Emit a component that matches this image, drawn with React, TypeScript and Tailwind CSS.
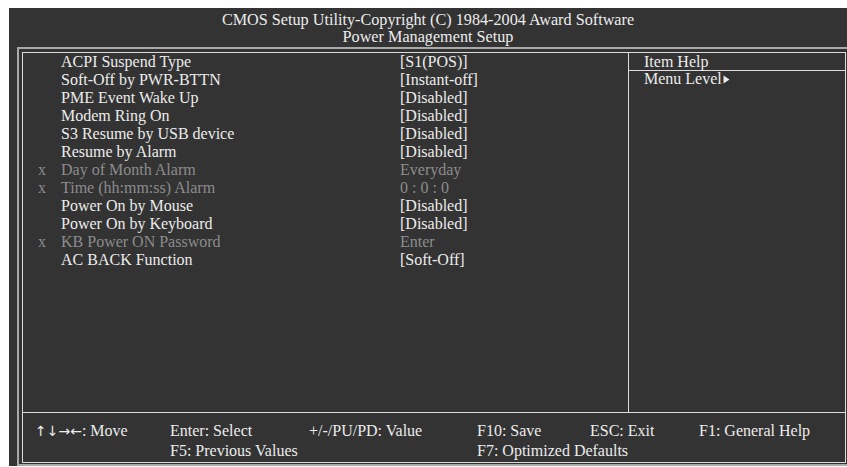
import React from "react";

type Row = { x?: boolean; label: string; value: string };

const rows: Row[] = [
  { label: "ACPI Suspend Type", value: "[S1(POS)]" },
  { label: "Soft-Off by PWR-BTTN", value: "[Instant-off]" },
  { label: "PME Event Wake Up", value: "[Disabled]" },
  { label: "Modem Ring On", value: "[Disabled]" },
  { label: "S3 Resume by USB device", value: "[Disabled]" },
  { label: "Resume by Alarm", value: "[Disabled]" },
  { x: true, label: "Day of Month Alarm", value: "Everyday" },
  { x: true, label: "Time (hh:mm:ss) Alarm", value: "0 : 0 : 0" },
  { label: "Power On by Mouse", value: "[Disabled]" },
  { label: "Power On by Keyboard", value: "[Disabled]" },
  { x: true, label: "KB Power ON Password", value: "Enter" },
  { label: "AC BACK Function", value: "[Soft-Off]" },
];

const arrowFont = { fontFamily: '"DejaVu Sans", sans-serif' };

export default function App() {
  return (
    <div
      className="w-[847px] h-[467px] bg-white pl-[9px] pt-[8px] overflow-hidden"
      style={{ fontFamily: '"Liberation Serif", "Times New Roman", serif' }}
    >
      <div className="bg-[#333333] w-[838px] h-[458px] flex flex-col text-[#ececec]">
        <div className="h-[39px] pt-[4px] text-center text-[16.2px] leading-[17px] whitespace-nowrap">
          <div>CMOS Setup Utility-Copyright (C) 1984-2004 Award Software</div>
          <div>Power Management Setup</div>
        </div>
        <div className="ml-[8px] flex-1 border-l-2 border-t-2 border-b-2 border-[#a9a9a9] pl-[3px] pt-[3px] pb-[1px] pr-[1px] flex">
          <div className="flex-1 border border-[#dcdcdc] flex flex-col">
            <div className="h-[359px] flex">
              <div className="w-[605px] text-[16px] leading-[18px]">
                {rows.map((r, i) => (
                  <div
                    key={i}
                    className={`flex h-[18px] whitespace-nowrap ${r.x ? "text-[#8c8c8c]" : "text-[#ececec]"}`}
                  >
                    <span className="w-[38px] pl-[15px]">{r.x ? "x" : ""}</span>
                    <span className="w-[339px]">{r.label}</span>
                    <span>{r.value}</span>
                  </div>
                ))}
              </div>
              <div className="flex-1 border-l border-[#dcdcdc] text-[16px]">
                <div className="h-[18px] leading-[18px] pl-[15px] border-b border-[#dcdcdc]">Item Help</div>
                <div className="leading-[16px] pl-[15px] flex items-center">
                  <span>Menu Level</span>
                  <svg width="7" height="9" viewBox="0 0 7 9" className="ml-[1px]">
                    <path d="M0.5 0.5 L6.5 4.5 L0.5 8.5 Z" fill="#ececec" />
                  </svg>
                </div>
              </div>
            </div>
            <div className="flex-1 border-t border-[#dcdcdc] pt-[8px] text-[16px] leading-[19px] whitespace-nowrap">
              <div className="flex">
                <span className="w-[147px] pl-[12px]">
                  <span className="text-[14px]" style={arrowFont}>↑↓→←</span>
                  <span>: Move</span>
                </span>
                <span className="w-[139px]">Enter: Select</span>
                <span className="w-[168px]">+/-/PU/PD: Value</span>
                <span className="w-[113px]">F10: Save</span>
                <span className="w-[109px]">ESC: Exit</span>
                <span>F1: General Help</span>
              </div>
              <div className="flex">
                <span className="w-[147px]"></span>
                <span className="w-[307px]">F5: Previous Values</span>
                <span>F7: Optimized Defaults</span>
              </div>
            </div>
          </div>
        </div>
      </div>
    </div>
  );
}
